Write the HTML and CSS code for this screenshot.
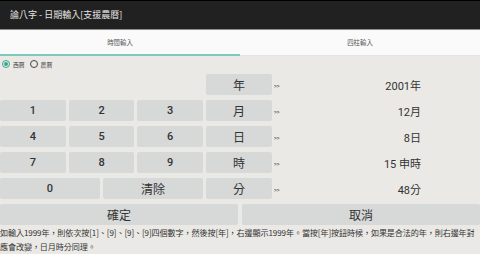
FILE: index.html
```html
<!DOCTYPE html>
<html lang="zh-Hant">
<head>
<meta charset="utf-8">
<title>論八字 - 日期輸入</title>
<link rel="stylesheet" href="styles.css">
</head>
<body>
<div class="app">
  <header class="titlebar">論八字 - 日期輸入[支援農曆]</header>
  <nav class="tabs">
    <div class="tab active">時間輸入</div>
    <div class="tab">四柱輸入</div>
  </nav>
  <main class="content">
    <div class="radios">
      <span class="radio checked"></span><span class="rlabel">西曆</span>
      <span class="radio"></span><span class="rlabel">農曆</span>
    </div>
    <div class="rows">
      <div class="row">
        <div class="keys"></div>
        <div class="btn unit">年</div>
        <span class="arrow">&gt;&gt;</span>
        <span class="value">2001年</span>
      </div>
      <div class="row">
        <div class="keys">
          <div class="btn digit">1</div>
          <div class="btn digit">2</div>
          <div class="btn digit">3</div>
        </div>
        <div class="btn unit">月</div>
        <span class="arrow">&gt;&gt;</span>
        <span class="value">12月</span>
      </div>
      <div class="row">
        <div class="keys">
          <div class="btn digit">4</div>
          <div class="btn digit">5</div>
          <div class="btn digit">6</div>
        </div>
        <div class="btn unit">日</div>
        <span class="arrow">&gt;&gt;</span>
        <span class="value">8日</span>
      </div>
      <div class="row">
        <div class="keys">
          <div class="btn digit">7</div>
          <div class="btn digit">8</div>
          <div class="btn digit">9</div>
        </div>
        <div class="btn unit">時</div>
        <span class="arrow">&gt;&gt;</span>
        <span class="value">15 申時</span>
      </div>
      <div class="row">
        <div class="keys">
          <div class="btn digit">0</div>
          <div class="btn label">清除</div>
        </div>
        <div class="btn unit">分</div>
        <span class="arrow">&gt;&gt;</span>
        <span class="value">48分</span>
      </div>
      <div class="actions">
        <div class="btn label">確定</div>
        <div class="btn label">取消</div>
      </div>
    </div>
    <p class="help">如輸入1999年，則依次按[1]、[9]、[9]、[9]四個數字，然後按[年]，右邊顯示1999年。當按[年]按鈕時候，如果是合法的年，則右邊年對應會改變，日月時分同理。</p>
  </main>
</div>
</body>
</html>
```
FILE: styles.css
```css
* { box-sizing: border-box; }
html, body {
  margin: 0;
  padding: 0;
  width: 480px;
  height: 254px;
  overflow: hidden;
  background: #ebe9e5;
  font-family: Roboto, "Noto Sans CJK TC", sans-serif;
  color: #333;
}
.app {
  display: flex;
  flex-direction: column;
  height: 254px;
}
.titlebar {
  height: 30px;
  background: #212121;
  border-top: 1px solid #000;
  border-bottom: 1px solid #8c8c8c;
  color: #e4e4e4;
  font-size: 9px;
  line-height: 28px;
  padding-left: 10px;
  font-family: "Noto Sans CJK TC", sans-serif;
}
.tabs {
  display: flex;
  height: 28px;
  background: #fafafa;
}
.tab {
  flex: 1;
  display: flex;
  align-items: center;
  justify-content: center;
  font-size: 6.4px;
  color: #555;
  border-bottom: 1px solid #e4e4e4;
  font-family: "Noto Sans CJK TC", sans-serif;
}
.tab.active {
  border-bottom: 2px solid #80c8bc;
}
.content {
  flex: 1;
  display: flex;
  flex-direction: column;
}
.radios {
  height: 18px;
  display: flex;
  align-items: center;
  padding-left: 2px;
  padding-bottom: 2px;
}
.radio {
  width: 8px;
  height: 8px;
  border-radius: 50%;
  border: 1px solid #444;
  margin-right: 3px;
  position: relative;
}
.radio.checked {
  border-color: #3aa894;
}
.radio.checked::after {
  content: "";
  position: absolute;
  left: 1px;
  top: 1px;
  width: 4px;
  height: 4px;
  border-radius: 50%;
  background: #3aa894;
}
.rlabel {
  font-size: 5.8px;
  color: #444;
  margin-right: 5px;
  font-family: "Noto Sans CJK TC", sans-serif;
}
.rows {
  display: flex;
  flex-direction: column;
  gap: 5px;
}
.row {
  display: flex;
  height: 21px;
  align-items: stretch;
}
.keys {
  width: 203px;
  display: flex;
  gap: 3px;
}
.btn {
  flex: 1;
  background: #d7d8d8;
  border-radius: 2px;
  display: flex;
  align-items: center;
  justify-content: center;
  color: #333;
}
.digit {
  font-family: Roboto, sans-serif;
  font-weight: 500;
  font-size: 11px;
}
.label, .unit {
  font-family: "Noto Sans CJK TC", sans-serif;
  font-size: 12px;
}
.unit {
  flex: 0 0 66px;
  margin-left: 3px;
}
.arrow {
  width: 20px;
  font-size: 5.5px;
  font-weight: 500;
  color: #444;
  display: flex;
  align-items: center;
  padding-left: 2px;
  padding-top: 2px;
}
.value {
  flex: 1;
  display: flex;
  align-items: center;
  justify-content: flex-end;
  padding-right: 59px;
  font-size: 11px;
  color: #333;
}
.actions {
  display: flex;
  gap: 4px;
  height: 21px;
}
.help {
  margin: 1px 0 0;
  font-family: "Noto Sans CJK TC", sans-serif;
  font-size: 8.1px;
  letter-spacing: -0.12px;
  line-height: 14px;
  color: #333;
}
```
